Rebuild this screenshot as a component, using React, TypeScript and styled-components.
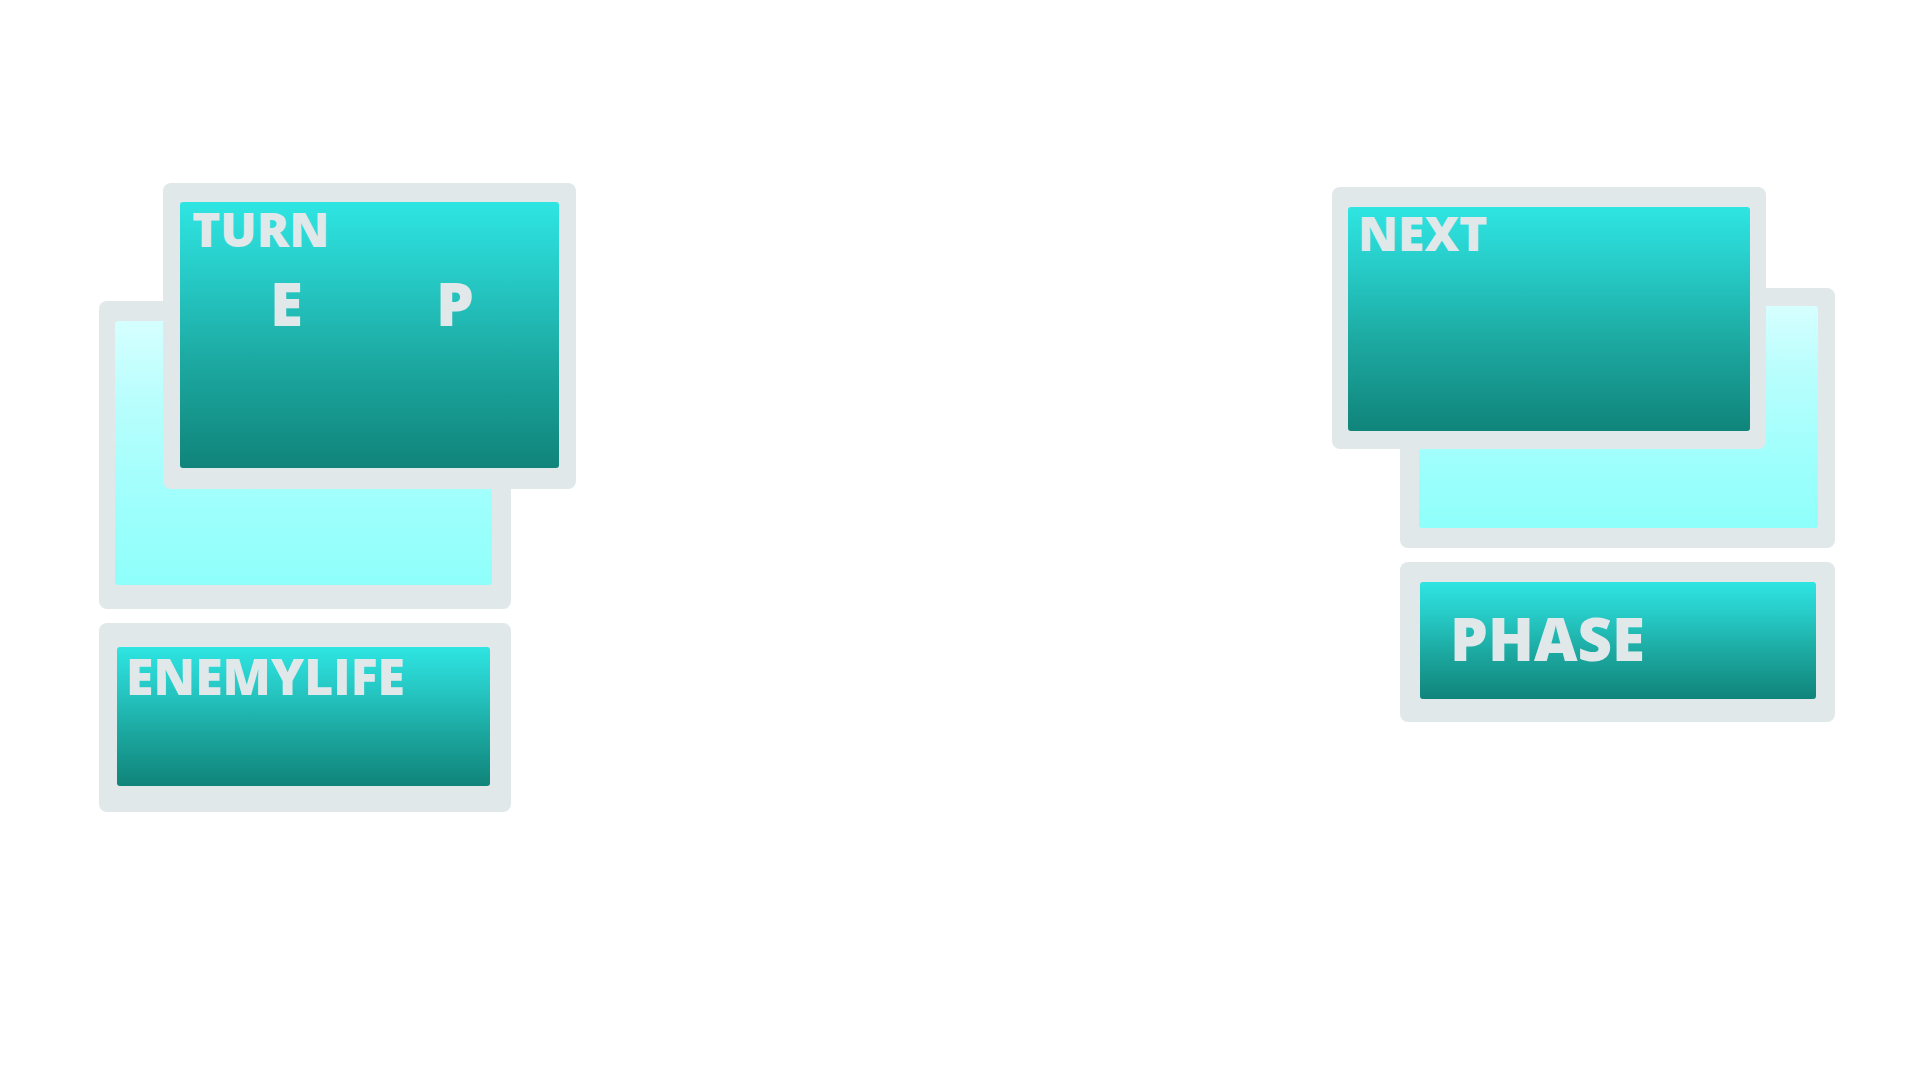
import React from 'react'
import styled, { createGlobalStyle } from 'styled-components'

const GlobalStyle = createGlobalStyle`
  html, body {
    margin: 0;
    padding: 0;
    background: #ffffff;
  }
  body {
    font-family: "Open Sans", "DejaVu Sans", sans-serif;
  }
`

const Screen = styled.div`
  width: 1920px;
  height: 1080px;
  display: flex;
  justify-content: space-between;
  align-items: flex-start;
  box-sizing: border-box;
  padding: 0 85px 0 99px;
  overflow: hidden;
`

const Column = styled.div<{ $top: number }>`
  display: flex;
  flex-direction: column;
  align-items: flex-start;
  gap: 14px;
  margin-top: ${p => p.$top}px;
`

/* two cards laid into the same grid cell, one over the other */
const Stack = styled.div<{ $w: number; $h: number }>`
  display: grid;
  grid-template: 1fr / 1fr;
  width: ${p => p.$w}px;
  height: ${p => p.$h}px;
`

const Frame = styled.div<{
  $w: number
  $h: number
  $front?: boolean
  $alignX: string
  $alignY: string
  $pad: string
}>`
  grid-area: 1 / 1;
  justify-self: ${p => p.$alignX};
  align-self: ${p => p.$alignY};
  z-index: ${p => (p.$front ? 2 : 1)};
  width: ${p => p.$w}px;
  height: ${p => p.$h}px;
  box-sizing: border-box;
  padding: ${p => p.$pad};
  background: #e0e8e9;
  border-radius: 8px;
  display: flex;
`

const Plate = styled.div<{ $w: number; $h: number; $shift?: number; $pad: string }>`
  width: ${p => p.$w}px;
  height: ${p => p.$h}px;
  margin-left: ${p => p.$shift || 0}px;
  box-sizing: border-box;
  padding: ${p => p.$pad};
  background: #e0e8e9;
  border-radius: 8px;
  display: flex;
`

const Display = styled.div<{ $pad: string }>`
  flex: 1;
  min-width: 0;
  border-radius: 3px;
  padding: ${p => p.$pad};
  background: linear-gradient(180deg, #2ee5e2 0%, #26c8c4 30%, #1ca9a1 60%, #10847a 100%);
  display: flex;
  flex-direction: column;
  align-items: flex-start;
`

const Glass = styled.div`
  flex: 1;
  border-radius: 3px;
  background: linear-gradient(180deg, #d6ffff 0%, #b8fefd 30%, #9efffc 70%, #8ffffb 100%);
`

const Label = styled.div<{ $size: number }>`
  font-family: "Open Sans", "DejaVu Sans", sans-serif;
  font-weight: 800;
  font-size: ${p => p.$size}px;
  line-height: 1;
  color: #e0e8ea;
  white-space: nowrap;
`

const SideRow = styled.div`
  display: flex;
  margin: 20px 0 0 78px;
`

const Side = styled.span`
  width: 166px;
  font-family: "Open Sans", "DejaVu Sans", sans-serif;
  font-weight: 800;
  font-size: 60px;
  line-height: 1;
  color: #e0e8ea;
  &:last-child {
    width: auto;
  }
`

export default function App() {
  return (
    <>
      <GlobalStyle />
      <Screen>
        <Column $top={183}>
          <Stack $w={477} $h={426}>
            <Frame $w={412} $h={308} $alignX="start" $alignY="end" $pad="20px 19px 24px 16px">
              <Glass />
            </Frame>
            <Frame $w={413} $h={306} $alignX="end" $alignY="start" $front $pad="19px 17px 21px 17px">
              <Display $pad="3px 12px">
                <Label $size={48}>TURN</Label>
                <SideRow>
                  <Side>E</Side>
                  <Side>P</Side>
                </SideRow>
              </Display>
            </Frame>
          </Stack>
          <Plate $w={412} $h={189} $pad="24px 21px 26px 18px">
            <Display $pad="4px 9px">
              <Label $size={50}>ENEMYLIFE</Label>
            </Display>
          </Plate>
        </Column>

        <Column $top={187}>
          <Stack $w={503} $h={361}>
            <Frame $w={435} $h={260} $alignX="end" $alignY="end" $pad="18px 17px 20px 19px">
              <Glass />
            </Frame>
            <Frame $w={434} $h={262} $alignX="start" $alignY="start" $front $pad="20px 16px 18px 16px">
              <Display $pad="2px 10px">
                <Label $size={48}>NEXT</Label>
              </Display>
            </Frame>
          </Stack>
          <Plate $w={435} $h={160} $shift={68} $pad="20px 19px 23px 20px">
            <Display $pad="26px 30px">
              <Label $size={60}>PHASE</Label>
            </Display>
          </Plate>
        </Column>
      </Screen>
    </>
  )
}
